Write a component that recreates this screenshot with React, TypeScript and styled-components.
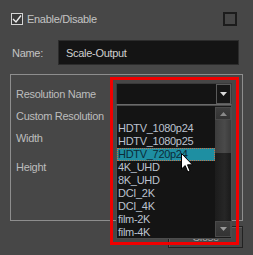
import React from "react";
import styled, { createGlobalStyle } from "styled-components";

const GlobalStyle = createGlobalStyle`
	html, body {
		margin: 0;
		padding: 0;
		background: #474747;
	}
	body {
		font-family: "Liberation Sans", Arial, sans-serif;
		font-size: 11px;
		letter-spacing: -0.3px;
		color: #c4c4c4;
	}
`;

const Page = styled.div`
	position: relative;
	width: 253px;
	height: 255px;
	box-sizing: border-box;
	padding: 12px 10px 0 10px;
	background: #474747;
	overflow: hidden;
`;

const HeaderRow = styled.div`
	display: flex;
	align-items: center;
	height: 14px;
	padding-left: 1px;
`;

const CheckBox = styled.div`
	width: 12px;
	height: 12px;
	box-sizing: border-box;
	border: 1px solid #d4d4d4;
	background: #3a3a3a;
	display: flex;
	align-items: center;
	justify-content: center;
`;

const CheckLabel = styled.span`
	margin-left: 4px;
	flex: 1;
	line-height: 14px;
`;

const EmptyBox = styled.div`
	width: 14px;
	height: 14px;
	box-sizing: border-box;
	border: 2px solid #1c1c1c;
	margin-right: 6px;
`;

const NameRow = styled.div`
	display: flex;
	align-items: center;
	margin-top: 14px;
	height: 25px;
`;

const NameLabel = styled.span`
	width: 48px;
	padding-left: 2px;
	box-sizing: border-box;
`;

const NameInput = styled.div`
	width: 181px;
	height: 25px;
	box-sizing: border-box;
	background: #141414;
	border: 1px solid #2c2c2c;
	padding-left: 7px;
	display: flex;
	align-items: center;
	color: #cfcfcf;
`;

const Group = styled.div`
	margin-top: 9px;
	height: 147px;
	box-sizing: border-box;
	border: 1px solid #8e8e8e;
	display: grid;
	grid-template-columns: 100px 116px;
	padding: 8px 0 0 5px;
`;

const LabelCol = styled.div`
	display: flex;
	flex-direction: column;
`;

const FieldLabel = styled.div<{ $mt?: number }>`
	line-height: 22px;
	margin-top: ${(p) => p.$mt ?? 0}px;
	color: #bdbdbd;
`;

const ComboBox = styled.div`
	width: 116px;
	height: 22px;
	box-sizing: border-box;
	background: #141414;
	border: 1px solid #3a3a3a;
	border-bottom-color: #6a6a6a;
	display: flex;
`;

const ComboText = styled.div`
	flex: 1;
`;

const ComboButton = styled.div`
	width: 15px;
	border: 1px solid #5a5a5a;
	box-sizing: border-box;
	background: #161616;
	display: flex;
	align-items: center;
	justify-content: center;
`;

const ButtonRow = styled.div`
	display: flex;
	justify-content: flex-end;
	margin-top: 5px;
`;

const CloseButton = styled.div`
	width: 75px;
	height: 22px;
	box-sizing: border-box;
	border: 1px solid #222;
	box-shadow: inset 1px 1px 0 #5e5e5e;
	background: #474747;
	color: #a8a8a8;
	display: flex;
	align-items: center;
	justify-content: center;
`;

const RedFrame = styled.div`
	position: absolute;
	left: 110px;
	top: 77px;
	width: 129px;
	height: 168px;
	box-sizing: border-box;
	border: 3px solid #f00000;
	pointer-events: none;
`;

const Popup = styled.div`
	position: absolute;
	left: 116px;
	top: 105px;
	width: 116px;
	height: 134px;
	box-sizing: border-box;
	background: #141414;
	border: 1px solid #4c4c4c;
	display: flex;
`;

const List = styled.div`
	flex: 1;
	display: flex;
	flex-direction: column;
	padding-top: 16px;
`;

const Item = styled.div<{ $active?: boolean }>`
	height: 13px;
	line-height: 13px;
	padding-left: 1px;
	box-sizing: border-box;
	font-size: 11px;
	color: ${(p) => (p.$active ? "#0c2c38" : "#bcc2d0")};
	background: ${(p) => (p.$active ? "#1e8fa2" : "transparent")};
	outline: ${(p) => (p.$active ? "1px dotted #c0704a" : "none")};
	outline-offset: -1px;
	white-space: nowrap;
`;

const ScrollBar = styled.div`
	width: 16px;
	display: flex;
	flex-direction: column;
	padding: 1px 0;
	box-sizing: border-box;
	background: #1a1a1a;
`;

const ScrollBtn = styled.div<{ $h: number }>`
	height: ${(p) => p.$h}px;
	background: linear-gradient(#3e3e3e, #333);
	border: 1px solid #4a4a4a;
	box-sizing: border-box;
	display: flex;
	align-items: center;
	justify-content: center;
`;

const Thumb = styled.div`
	height: 33px;
	background: linear-gradient(90deg, #3c3c3c, #4a4a4a 60%, #3a3a3a);
`;

const Track = styled.div`
	flex: 1;
	background: linear-gradient(90deg, #1c1c1c, #262626 60%, #1a1a1a);
`;

const Cursor = styled.svg`
	position: absolute;
	left: 181px;
	top: 153px;
`;

const Tri: React.FC<{ up?: boolean; color: string }> = ({ up, color }) => (
	<svg width="7" height="4" viewBox="0 0 7 4">
		<path d={up ? "M0 4 L3.5 0 L7 4 Z" : "M0 0 L7 0 L3.5 4 Z"} fill={color} />
	</svg>
);

const items = [
	"HDTV_1080p24",
	"HDTV_1080p25",
	"HDTV_720p24",
	"4K_UHD",
	"8K_UHD",
	"DCI_2K",
	"DCI_4K",
	"film-2K",
	"film-4K",
];

export default function App() {
	return (
		<>
			<GlobalStyle />
			<Page>
				<HeaderRow>
					<CheckBox>
						<svg width="10" height="10" viewBox="0 0 10 10">
							<path d="M1 5 L4 8 L9 1.5" stroke="#ececec" strokeWidth="1.4" fill="none" />
						</svg>
					</CheckBox>
					<CheckLabel>Enable/Disable</CheckLabel>
					<EmptyBox />
				</HeaderRow>
				<NameRow>
					<NameLabel>Name:</NameLabel>
					<NameInput>Scale-Output</NameInput>
				</NameRow>
				<Group>
					<LabelCol>
						<FieldLabel>Resolution Name</FieldLabel>
						<FieldLabel>Custom Resolution</FieldLabel>
						<FieldLabel>Width</FieldLabel>
						<FieldLabel $mt={7}>Height</FieldLabel>
					</LabelCol>
					<div>
						<ComboBox>
							<ComboText />
							<ComboButton>
								<Tri color="#dcdcdc" />
							</ComboButton>
						</ComboBox>
					</div>
				</Group>
				<ButtonRow>
					<CloseButton>Close</CloseButton>
				</ButtonRow>

				<Popup>
					<List>
						{items.map((it) => (
							<Item key={it} $active={it === "HDTV_720p24"}>
								{it}
							</Item>
						))}
					</List>
					<ScrollBar>
						<ScrollBtn $h={13}>
							<Tri up color="#8a8a8a" />
						</ScrollBtn>
						<Thumb />
						<Track />
						<ScrollBtn $h={16}>
							<Tri color="#9a9a9a" />
						</ScrollBtn>
					</ScrollBar>
				</Popup>
				<RedFrame />
				<Cursor width="13" height="21" viewBox="0 0 13 21">
					<path
						d="M0.5 0.5 L0.5 16 L4.2 12.6 L6.8 19 L9 18 L6.5 11.8 L11.5 11.8 Z"
						fill="#fff"
						stroke="#000"
						strokeWidth="1"
					/>
				</Cursor>
			</Page>
		</>
	);
}
